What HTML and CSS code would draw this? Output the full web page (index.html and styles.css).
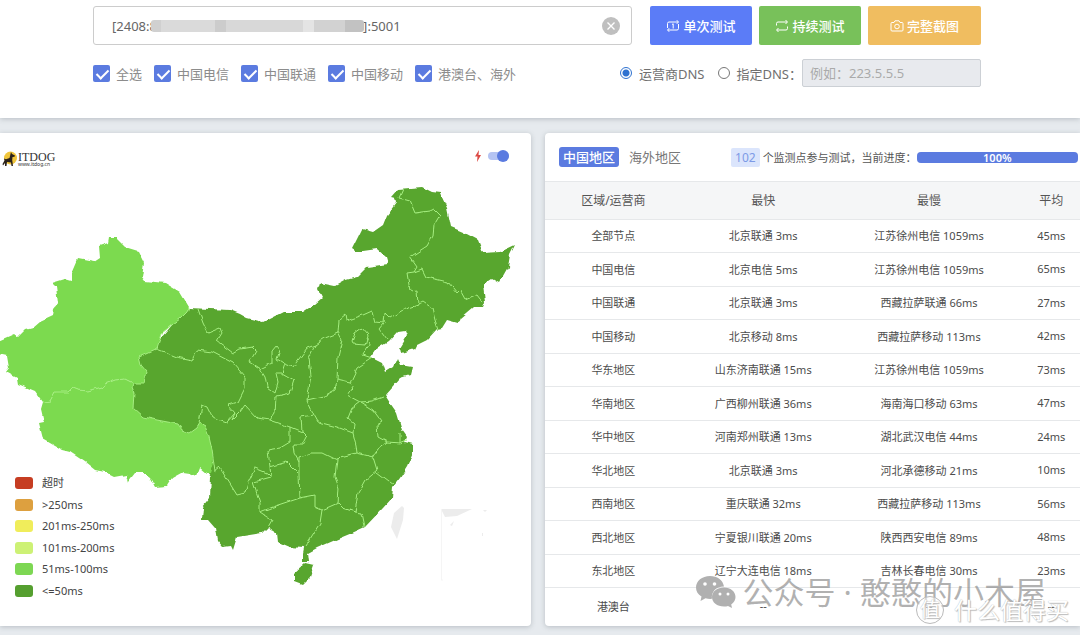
FILE: index.html
```html
<!DOCTYPE html>
<html lang="zh-CN">
<head>
    <meta charset="UTF-8">
    <meta name="viewport" content="width=device-width, initial-scale=1.0">
    <title>ITDOG 在线测试</title>
    <link rel="stylesheet" href="styles.css">
</head>
<body>
    <form class="search-card">
        <div class="search-row">
            <div class="host-box">
                <input type="text" class="host-input" aria-label="测试地址" value="[2408:8                                                             ]:5001">
                <span class="host-mask"></span>
                <button type="button" class="clear-btn" aria-label="清空">
                    <svg viewBox="0 0 18 18" width="18" height="18"><circle cx="9" cy="9" r="9" fill="#bfbfbf"/><path d="M5.5 5.5l7 7M12.5 5.5l-7 7" stroke="#fff" stroke-width="1.4"/></svg>
                </button>
            </div>
            <div class="btn-group">
                <button type="button" class="btn btn-blue">
                    <svg class="icon" viewBox="0 0 14 14"><path d="M1.500 9V4.500Q1.500 3 3 3H12M10.800 1.200L12.500 3 10.800 4.800M12.500 5v4.500q0 1.500-1.500 1.500H2M3.200 9.200L1.500 11 3.200 12.800M6 5.500L7.200 4.800V9.500"/></svg>
                    单次测试
                </button>
                <button type="button" class="btn btn-green">
                    <svg class="icon" viewBox="0 0 14 14"><path d="M1.500 6.500V4.500Q1.500 3 3 3H12M10.500 1L12.500 3 10.500 5M12.500 7.500v2q0 1.500-1.500 1.500H2M3.500 9L1.500 11 3.500 13"/></svg>
                    持续测试
                </button>
                <button type="button" class="btn btn-orange">
                    <svg class="icon" viewBox="0 0 14 14"><path d="M2 3.500H4L5 1.800H9L10 3.500H12Q13 3.500 13 4.500V11Q13 12 12 12H2Q1 12 1 11V4.500Q1 3.500 2 3.500Z"/><circle cx="7" cy="7.500" r="2.300"/></svg>
                    完整截图
                </button>
            </div>
        </div>
        <div class="option-row">
            <div class="checks">
                <label class="check"><input type="checkbox" checked>全选</label>
                <label class="check"><input type="checkbox" checked>中国电信</label>
                <label class="check"><input type="checkbox" checked>中国联通</label>
                <label class="check"><input type="checkbox" checked>中国移动</label>
                <label class="check"><input type="checkbox" checked>港澳台、海外</label>
            </div>
            <div class="dns">
                <label class="radio"><input type="radio" name="dns" checked>运营商DNS</label>
                <label class="radio"><input type="radio" name="dns">指定DNS：</label>
                <input type="text" class="dns-input" aria-label="指定DNS" placeholder="例如：223.5.5.5" disabled>
            </div>
        </div>
    </form>

    <div class="panels">
        <div class="panel map-panel">
            <div class="map-header">
                <a href="#" class="logo">
                    <svg viewBox="0 0 16 16" width="16" height="16"><circle cx="8.500" cy="7" r="6.500" fill="#f0c53c"/><path d="M9 1l1 2 3 1.500-.5 1.200-2 .3-.3 3 .8 6H9.500L9 11.500 5 11l-.5 4H3L3 12 1 14.500.5 13 2.500 9.500 2 7.500l2 .8L7.500 7Z" fill="#2b221b"/></svg>
                    <span class="logo-text"><b>ITDOG</b><small>www.itdog.cn</small></span>
                </a>
                <label class="fast">
                    <svg viewBox="0 0 8 12" width="8" height="12"><path d="M5 0L1 6.500H3.500L3 12 7 5H4.500Z" fill="#dc4a45"/></svg>
                    <input type="checkbox" class="switch" aria-label="极速模式" checked>
                </label>
            </div>
            <svg class="map" viewBox="0 181 531 445" role="img" aria-label="中国地图">
                <defs>
                    <filter id="rough" x="-5%" y="-5%" width="110%" height="110%">
                        <feTurbulence type="fractalNoise" baseFrequency="0.14" numOctaves="1" seed="4" result="noise"/>
                        <feDisplacementMap in="SourceGraphic" in2="noise" scale="5" xChannelSelector="R" yChannelSelector="G"/>
                    </filter>
                </defs>
                <g filter="url(#rough)">
                    <path class="area-50" d="M185 310L189 308 210 309 230 310 240 314 247 318 263 322 277 315 283 312 303 312 315 304 322 298 318 290 320 283 335 286 346 280 357 277 367 267 388 264 386 257 377 249 363 251 355 251 352 249 362 229 373 232 383 225 387 215 396 203 395 198 391 197 398 189 422 187 432 192 440 193 447 208 451 227 463 232 478 240 483 253 500 252 515 245 510 255 508 267 499 283 492 279 483 285 485 302 483 307 473 307 460 318 458 323 447 320 442 328 437 329 427 340 417 345 415 349 402 353 399 348 407 335 405 330 398 331 388 342 375 350 370 357 382 363 385 372 393 367 397 358 400 365 412 367 410 375 400 378 385 395 390 403 397 413 402 430 407 437 405 442 413 444 413 453 407 467 400 478 393 487 392 498 383 508 365 527 352 533 340 538 317 548 308 553 309 562 303 562 303 553 304 548 290 547 278 542 277 533 268 527 262 533 237 537 233 550 231 546 223 547 217 540 215 528 208 520 202 520 203 507 210 498 211 477 207 472 205 460 180 440 130 410 130 385 135 360 155 345Z"/>
                    <path class="area-50" d="M305 563L314 565 310 577 302 585 294 582 294 573Z"/>
                    <path class="area-100" d="M109 237H117L117 239 125 247 138 251 144 263 142 277 145 281 165 283 180 292 189 307 187 312 180 319 173 324 162 333 157 349 139 357 141 365 147 372 144 383 133 383 125 379 115 380 105 384 102 387 88 391 78 390 73 388 69 392 55 392 50 401 43 402 35 391 18 384 17 378 6 372 9 368 7 356 -2 354V341L14 334 18 337 25 330 33 328 40 322 53 316 54 308 58 303 56 287 52 283 65 279 72 281 72 273 78 259 94 262 100 258 99 246 108 243Z"/>
                    <path class="area-100" d="M43 402L50 401 55 392 69 392 73 388 78 390 88 391 102 387 105 384 115 380 125 379 133 383 132 388 134 393 133 408 143 417 157 420 178 424 182 430 190 433 197 428 200 423 205 426 209 437 212 450 213 463 210 473 206 473 200 468 197 476 190 473 183 472 172 478 167 486 155 487 150 478 143 473 135 473 128 482 126 475 115 477 105 472 95 470 85 462 70 452 62 450 43 439 39 423 44 422 41 409Z"/>
                    <!-- province borders -->
                    <g class="borders">
                        <path d="M189 307L187 312 180 319 173 324 162 333 157 349 139 357 141 365 147 372 144 383 133 383 125 379 115 380 105 384 102 387 88 391 78 390 73 388 69 392 55 392 50 401 43 402"/>
                        <path d="M133 383L132 388 134 393 133 408 143 417 157 420 178 424 182 430 190 433 197 428 200 423 205 426 209 437 212 450 215 472 220 468 237 495 245 493 248 483 255 468 267 473 271 477 253 482"/>
                        <path d="M198 309L203 323 208 333 220 328 222 333 217 341 233 353 240 349 253 347 256 350 249 362 260 369 272 363 272 352 277 346 280 350 277 359 285 364 293 367 307 348 315 345 325 338 338 333 339 320 345 315 346 321 363 315 372 311 375 322 384 323 385 313 390 318 403 310 418 305 417 290 410 291 407 273 414 272 417 267 410 257 427 246 433 235 434 225 440 215 434 209 430 211 415 213 410 201 399 198 403 189"/>
                        <path d="M414 272L422 269 426 277 448 282 457 293 460 290 465 299 477 294 483 302M418 303L422 301 432 308 435 320 438 329M383 324L379 329 387 340"/>
                        <path d="M352 342L355 333 362 328 368 335 365 345 353 344ZM368 337L369 345 363 355 372 358 357 368 350 383 354 385 347 395 360 402 372 401 383 397"/>
                        <path d="M157 349L177 357 192 360 197 350 212 352 233 363 245 377 245 388 238 402 228 405 235 413 227 422 212 417 207 407 202 405 199 423"/>
                        <path d="M235 413L232 420 240 412 245 405 257 418 270 420 290 427 302 432 301 417 314 415 307 400 311 377 309 358 315 345M270 420L275 413 276 396 290 393 294 380 282 373 285 364M260 369L265 377 267 387 275 393 278 382 276 373 282 373"/>
                        <path d="M338 333L342 340 338 357 337 380 335 390 324 396 307 400M337 380L350 383M314 415L318 422 337 427 353 433 354 423 348 418 352 408 360 402 373 410 382 422 377 425 378 437 387 442 400 443 407 440M400 443L400 433"/>
                        <path d="M353 433L356 445 357 453 373 457 378 449 387 442M373 457L377 470 365 480 358 493 355 512 362 513 365 527M377 472L393 484M357 453L340 457 337 460 323 453 310 453 299 457 299 475 300 498"/>
                        <path d="M337 460L335 477 339 488 338 503 322 510 315 507 315 495 300 498 273 507 260 512 272 520 268 527M338 503L343 508 355 512M322 510L320 523 305 547"/>
                        <path d="M290 427L290 442 280 448 268 450 270 467 271 477M302 432L307 437 303 445 293 445 294 453 299 462M298 473L287 462 270 467M253 482L260 503 260 512"/>
                    </g>
                </g>
                <path class="no-data" d="M402 506L404 508 403 520 397 539 391 527 394 513ZM441 509H472L457 516 445 517ZM450 525L454 521 452 526ZM483 510H487L485 512ZM482 533H483V536H482Z"/>
                <path d="M441.500 509V580M441 580H443" stroke="#f5f5f5" fill="none"/>
            </svg>
            <ul class="legend">
                <li><i class="swatch timeout"></i>超时</li>
                <li><i class="swatch over-250"></i>&gt;250ms</li>
                <li><i class="swatch under-250"></i>201ms-250ms</li>
                <li><i class="swatch under-200"></i>101ms-200ms</li>
                <li><i class="swatch under-100"></i>51ms-100ms</li>
                <li><i class="swatch under-50"></i>&lt;=50ms</li>
            </ul>
        </div>

        <div class="panel result-panel">
            <div class="result-header">
                <button type="button" class="tab active">中国地区</button>
                <button type="button" class="tab">海外地区</button>
                <span class="count">102</span>
                <span class="status">个监测点参与测试，当前进度：</span>
                <div class="progress"><div class="progress-bar">100%</div></div>
            </div>
            <table>
                <thead>
                    <tr><th>区域/运营商</th><th>最快</th><th>最慢</th><th>平均</th></tr>
                </thead>
                <tbody>
                    <tr><td>全部节点</td><td>北京联通 3ms</td><td>江苏徐州电信 1059ms</td><td>45ms</td></tr>
                    <tr><td>中国电信</td><td>北京电信 5ms</td><td>江苏徐州电信 1059ms</td><td>65ms</td></tr>
                    <tr><td>中国联通</td><td>北京联通 3ms</td><td>西藏拉萨联通 66ms</td><td>27ms</td></tr>
                    <tr><td>中国移动</td><td>北京移动 8ms</td><td>西藏拉萨移动 113ms</td><td>42ms</td></tr>
                    <tr><td>华东地区</td><td>山东济南联通 15ms</td><td>江苏徐州电信 1059ms</td><td>73ms</td></tr>
                    <tr><td>华南地区</td><td>广西柳州联通 36ms</td><td>海南海口移动 63ms</td><td>47ms</td></tr>
                    <tr><td>华中地区</td><td>河南郑州联通 13ms</td><td>湖北武汉电信 44ms</td><td>24ms</td></tr>
                    <tr><td>华北地区</td><td>北京联通 3ms</td><td>河北承德移动 21ms</td><td>10ms</td></tr>
                    <tr><td>西南地区</td><td>重庆联通 32ms</td><td>西藏拉萨移动 113ms</td><td>56ms</td></tr>
                    <tr><td>西北地区</td><td>宁夏银川联通 20ms</td><td>陕西西安电信 89ms</td><td>48ms</td></tr>
                    <tr><td>东北地区</td><td>辽宁大连电信 18ms</td><td>吉林长春电信 30ms</td><td>23ms</td></tr>
                    <tr><td>港澳台</td><td>--</td><td>--</td><td>--</td></tr>
                </tbody>
            </table>
            <div class="watermark wechat">
                <svg viewBox="0 0 40 32" width="40" height="32"><path d="M14 0C6 0 0 5 0 11.500c0 4 2 7 5.500 9L4.500 25l5-2.800c2 .6 4.500.8 6.500.6C15 16 20 10.500 28 10.500 27 4 21 0 14 0Z"/><path d="M28 11.500c-7 0-12 4-12 9.500s5 9.500 12 9.500c1.500 0 3-.2 4-.6l4 2-.8-3.500c3-2 4.300-4.500 4.300-7.400C39.500 15.500 34.500 11.500 28 11.500Z"/><g fill="#fff"><circle cx="9" cy="8" r="1.800"/><circle cx="18.500" cy="8" r="1.800"/><circle cx="24" cy="18" r="1.500"/><circle cx="32" cy="18" r="1.500"/></g></svg>
                <span>公众号 · 憨憨的小木屋</span>
            </div>
            <div class="watermark smzdm">
                <span class="seal">值</span>
                <span>什么值得买</span>
            </div>
        </div>
    </div>
</body>
</html>
```
FILE: styles.css
```css
* {
    margin: 0;
    padding: 0;
    box-sizing: border-box;
}
body {
    font-family: "Noto Sans", "Noto Sans CJK SC", sans-serif;
    font-size: 13px;
    color: #555;
    background: #e6eaee;
}
button,
input {
    font-family: inherit;
    font-size: 13px;
}
button {
    border: none;
    cursor: pointer;
}

/* search area */
.search-card {
    background: white;
    height: 118px;
    padding: 6px 99px 0 93px;
    box-shadow: 0 1px 5px rgba(80, 90, 100, 0.3);
}
.search-row {
    display: flex;
    gap: 18px;
}
.host-box {
    position: relative;
    flex: 1;
}
.host-input {
    width: 100%;
    height: 39px;
    padding: 0 18px;
    border: 1px solid #ccc;
    border-radius: 3px;
    color: #666;
}
.host-mask {
    position: absolute;
    left: 58px;
    top: 14px;
    width: 213px;
    height: 12px;
    border-radius: 3px;
    background: linear-gradient(to right, #d0d0d0 0 10px, #dadada 10px 64px, #ccc 64px 75px, #d8d8d8 75px 152px, #e4e4e4 152px 163px, #d2d2d2 163px 194px, #c2c2c2 194px);
}
.clear-btn {
    position: absolute;
    right: 12px;
    top: 11px;
    width: 18px;
    height: 18px;
    background: none;
}
.clear-btn svg {
    display: block;
}
.btn-group {
    display: flex;
    gap: 7px;
}
.btn {
    display: flex;
    align-items: center;
    justify-content: center;
    gap: 3px;
    width: 102px;
    height: 39px;
    border-radius: 2px;
    color: white;
    font-weight: 500;
}
.btn-blue {
    background: #5b7cf7;
}
.btn-green {
    background: #78c15a;
}
.btn-orange {
    background: #f0bd60;
    width: 113px;
}
.icon {
    width: 14px;
    height: 14px;
    fill: none;
    stroke: white;
    stroke-width: 1;
}
.option-row {
    display: flex;
    justify-content: space-between;
    align-items: center;
    margin-top: 14px;
    height: 28px;
    white-space: nowrap;
}
.checks,
.dns,
.check,
.radio {
    display: flex;
    align-items: center;
}
.checks {
    gap: 12px;
    color: #8c8c8c;
}
.check {
    gap: 6px;
}
.check input {
    appearance: none;
    width: 17px;
    height: 17px;
    border-radius: 2px;
    background: #5b7be0;
    position: relative;
}
.check input:checked::after {
    content: "";
    position: absolute;
    left: 6px;
    top: 2px;
    width: 5px;
    height: 10px;
    border: solid white;
    border-width: 0 2px 2px 0;
    transform: rotate(45deg);
}
.radio {
    gap: 7px;
    margin-right: 14px;
    color: #707070;
}
.radio + .radio {
    gap: 6px;
    margin-right: 0;
}
.radio input {
    appearance: none;
    width: 12px;
    height: 12px;
    border: 1px solid #777;
    border-radius: 50%;
}
.radio input:checked {
    border-color: #2f72d0;
    background: radial-gradient(circle, #2f72d0 0 3px, white 4px);
}
.dns-input {
    width: 179px;
    height: 28px;
    padding: 0 7px;
    border: 1px solid #ccd0d5;
    border-radius: 2px;
    background: #e8eaee;
}
.dns-input::placeholder {
    color: #aaa;
}

/* panels */
.panels {
    display: grid;
    grid-template-columns: 531fr 535fr;
    gap: 14px;
    padding: 15px 0 9px;
}
.panel {
    position: relative;
    background: white;
    box-shadow: 0 1px 5px rgba(80, 90, 100, 0.3);
}
.map-panel {
    border-radius: 0 4px 4px 0;
}
.map-header {
    display: flex;
    justify-content: space-between;
    align-items: center;
    height: 48px;
    padding: 0 22px 2px 2px;
}
.logo {
    display: flex;
    align-items: center;
    padding-top: 6px;
    color: #333;
    text-decoration: none;
}
.logo-text b {
    display: block;
    font: 12px/10px "Liberation Serif", serif;
}
.logo-text small {
    display: block;
    font-size: 5px;
    line-height: 5px;
}
.fast {
    display: flex;
    align-items: center;
    gap: 6px;
}
.switch {
    appearance: none;
    position: relative;
    width: 21px;
    height: 8px;
    border-radius: 4px;
    background: #b5c4f3;
}
.switch::after {
    content: "";
    position: absolute;
    right: 0;
    top: -2px;
    width: 12px;
    height: 12px;
    border-radius: 50%;
    background: #5b7be0;
}
.map {
    display: block;
    width: 100%;
}
.area-50 {
    fill: #58a62e;
}
.area-100 {
    fill: #7cda50;
}
.borders {
    fill: none;
    stroke: #a5ee80;
    stroke-width: 1;
    stroke-linejoin: round;
}
.no-data {
    fill: #ececec;
}
.legend {
    position: absolute;
    left: 15px;
    bottom: 28px;
    height: 122px;
    display: flex;
    flex-direction: column;
    justify-content: space-between;
    list-style: none;
    font-size: 11px;
    line-height: 14px;
    color: #444;
}
.legend li {
    display: flex;
    align-items: center;
    gap: 9px;
}
.swatch {
    width: 18px;
    height: 12px;
    border-radius: 3px;
}
.timeout {
    background: #c63d22;
}
.over-250 {
    background: #dda03f;
}
.under-250 {
    background: #f0ed5b;
}
.under-200 {
    background: #cdf175;
}
.under-100 {
    background: #7dd753;
}
.under-50 {
    background: #559f2f;
}

/* results */
.result-panel {
    border-radius: 4px 0 0 4px;
}
.result-header {
    display: flex;
    align-items: center;
    height: 48px;
    padding: 0 2px 0 14px;
    white-space: nowrap;
}
.tab {
    height: 20px;
    padding: 0 4px;
    margin-right: 6px;
    border-radius: 3px;
    background: none;
    color: #777;
    line-height: 20px;
}
.tab.active {
    background: #5b7be0;
    color: white;
    font-weight: 500;
}
.count {
    margin: 0 3px 0 40px;
    padding: 0 4px;
    border-radius: 2px;
    background: #dbe5fc;
    color: #7d9ae6;
    font-size: 12px;
    line-height: 19px;
}
.status {
    font-size: 11px;
}
.progress {
    flex: 1;
    height: 11px;
    border-radius: 4px;
    background: #e9ecef;
}
.progress-bar {
    width: 100%;
    border-radius: 4px;
    background: #5b7be0;
    color: white;
    font-size: 11px;
    font-weight: 600;
    line-height: 11px;
    text-align: center;
}
table {
    width: 100%;
    table-layout: fixed;
    border-collapse: collapse;
    text-align: center;
    white-space: nowrap;
}
th {
    height: 38px;
    width: 31%;
    padding: 0 0 2px 3px;
    background: #f5f6f7;
    border-top: 1px solid #e6e8ea;
    border-bottom: 1px solid #e6e8ea;
    font-size: 12px;
    font-weight: normal;
}
th:first-child {
    width: 25%;
}
th:last-child {
    width: 13%;
}
td {
    height: 33px;
    padding: 0 0 2px 3px;
    border-bottom: 1px solid #e6e8ea;
    font-size: 11px;
    color: #4c4c4c;
}
th:last-child,
td:last-child {
    padding-left: 12px;
}
tr:nth-child(even) td {
    height: 34px;
}
tr:last-child td {
    height: 36px;
    padding-bottom: 0;
    border-bottom: none;
}

.watermark {
    position: absolute;
    display: flex;
    align-items: center;
    white-space: nowrap;
    pointer-events: none;
}
.wechat {
    right: 34px;
    bottom: 16px;
    gap: 7px;
    height: 36px;
    color: rgba(125, 125, 125, 0.6);
    font-size: 31px;
    line-height: 36px;
}
.wechat svg {
    fill: #b0b0b0;
}
.smzdm {
    right: 11px;
    bottom: 1px;
    gap: 10px;
    color: white;
    font-size: 23px;
    line-height: 30px;
    text-shadow: 1px 1px 1px #bbb, 0 0 1px #aaa;
}
.seal {
    width: 28px;
    height: 28px;
    border: 1px solid #bbb;
    border-radius: 50%;
    font-size: 20px;
    line-height: 26px;
    text-align: center;
    background: rgba(255, 255, 255, 0.5);
}
```
